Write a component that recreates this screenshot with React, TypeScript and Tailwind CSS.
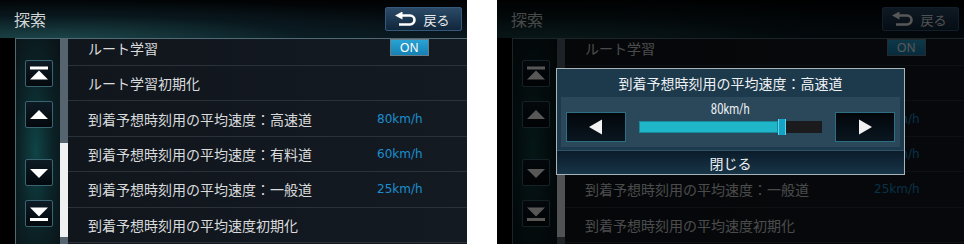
import React from "react";

type Row = { label: string; value?: string; on?: boolean };

const rows: Row[] = [
  { label: "ルート学習", on: true },
  { label: "ルート学習初期化" },
  { label: "到着予想時刻用の平均速度：高速道", value: "80km/h" },
  { label: "到着予想時刻用の平均速度：有料道", value: "60km/h" },
  { label: "到着予想時刻用の平均速度：一般道", value: "25km/h" },
  { label: "到着予想時刻用の平均速度初期化" },
];

const jp = "font-['Noto_Sans_CJK_JP','Noto_Sans',sans-serif]";

function ReturnIcon() {
  return (
    <svg width="22" height="14" viewBox="0 0 22 14">
      <polygon points="0,3.5 7.5,-0.5 7.5,7.5" fill="#fff" />
      <path
        d="M6 3.5 H15 A4.5 4.5 0 0 1 15 12.5 H4"
        fill="none"
        stroke="#fff"
        strokeWidth="2.6"
      />
    </svg>
  );
}

function SideButton({ kind }: { kind: "top" | "up" | "down" | "bottom" }) {
  return (
    <div className="w-[28px] h-[27px] rounded-[2px] border border-[#3b6472] bg-[linear-gradient(#0d1a24,#03080c)] flex items-center justify-center">
      <svg width="22" height="16" viewBox="0 0 22 16">
        {kind === "top" && (
          <>
            <rect x="2" y="0.5" width="18" height="3" fill="#fff" />
            <polygon points="11,4.5 20,13.5 2,13.5" fill="#fff" />
          </>
        )}
        {kind === "up" && <polygon points="11,3 20,12 2,12" fill="#fff" />}
        {kind === "down" && <polygon points="2,4 20,4 11,13" fill="#fff" />}
        {kind === "bottom" && (
          <>
            <polygon points="2,1.5 20,1.5 11,10.5" fill="#fff" />
            <rect x="2" y="12" width="18" height="3" fill="#fff" />
          </>
        )}
      </svg>
    </div>
  );
}

function Screen({ dimmed }: { dimmed?: boolean }) {
  return (
    <div className="relative w-[467px] h-[244px] overflow-hidden bg-black">
      <div className="h-[38px] flex items-center justify-between pl-[14px] pr-[5px] bg-[radial-gradient(ellipse_at_12%_110%,#1d4a4d_0%,rgba(10,30,36,0.6)_45%,transparent_75%),linear-gradient(#010203,#0b1820)]">
        <span className={`${jp} text-[16px] text-[#cfd3d4] leading-none`}>探索</span>
        <div className="w-[77px] h-[24px] rounded-[2px] border border-[#35597a] bg-[linear-gradient(#2c4b68,#10263b)] flex items-center justify-center gap-[6px] pr-[2px]">
          <ReturnIcon />
          <span className={`${jp} text-[13px] text-[#e8ecef] leading-none`}>戻る</span>
        </div>
      </div>

      <div className="ml-[15px] h-[206px] border-l border-t border-[#4f6a74] flex">
        <div className="w-[44px] flex flex-col pl-[9px] pt-[21px] bg-[radial-gradient(ellipse_at_45%_55%,#0f4446_0%,#0b2226_50%,#0a1216_100%)]">
          <SideButton kind="top" />
          <div className="mt-[14px]">
            <SideButton kind="up" />
          </div>
          <div className="mt-[31px]">
            <SideButton kind="down" />
          </div>
          <div className="mt-[14px]">
            <SideButton kind="bottom" />
          </div>
        </div>

        <div className="w-[8px] flex flex-col">
          <div className="h-[104px] bg-[#56646f]" />
          <div className="h-[94px] bg-[#eef0f2]" />
          <div className="flex-1 bg-[#56646f]" />
        </div>

        <div className="flex-1 flex flex-col bg-[linear-gradient(90deg,#11161d,#141a22)]">
          {rows.map((r, i) => (
            <div
              key={i}
              className={`h-[35.4px] shrink-0 border-b border-[#2b3139] grid grid-cols-[289px_1fr] items-center pl-[20px] ${
                i === 0 ? "mt-[-8.4px]" : ""
              }`}
            >
              <span className={`${jp} text-[14px] text-[#d9dbdc] leading-none whitespace-nowrap`}>
                {r.label}
              </span>
              {r.on && (
                <div className="ml-[13px] w-[39px] h-[17px] border border-[#6b7c86] bg-[linear-gradient(#2aa3d4,#1580b4)] flex items-center justify-center">
                  <span className="font-['Liberation_Sans',sans-serif] text-[12px] text-white leading-none tracking-[0.5px]">
                    ON
                  </span>
                </div>
              )}
              {r.value && (
                <span className="font-['DejaVu_Sans',sans-serif] text-[12px] text-[#1b8fd0] leading-none">
                  {r.value}
                </span>
              )}
            </div>
          ))}
        </div>
      </div>

      {dimmed && <div className="absolute inset-0 bg-black/[0.66]" />}

      {dimmed && (
        <div className="absolute left-[59px] top-[68px] w-[349px] h-[107px] border border-[#a7b4ba] bg-[#1d394c] flex flex-col">
          <div className={`h-[28px] flex items-center justify-center ${jp} text-[14px] text-[#eef1f3] leading-none`}>
            到着予想時刻用の平均速度：高速道
          </div>
          <div className="mx-[4px] h-[50px] bg-[#2b485b] flex items-start px-[5px] pt-[3px]">
            <div className="mt-[12px] w-[60px] h-[30px] border border-[#2c6e82] bg-[linear-gradient(#02060a,#0a1620)] flex items-center justify-center">
              <svg width="14" height="16" viewBox="0 0 14 16">
                <polygon points="0,8 13,0.5 13,15.5" fill="#f2f2f2" />
              </svg>
            </div>
            <div className="flex-1 mx-[13px] flex flex-col">
              <div className="h-[18px] flex items-center justify-center">
                <span className="font-['Roboto',sans-serif] text-[14px] text-[#eef1f3] leading-none inline-block scale-x-[0.8]">
                  80km/h
                </span>
              </div>
              <div className="mt-[3px] h-[12px] bg-[#1b1b1d] flex items-center">
                <div className="h-full w-[139px] bg-[#1fb6c9] border border-[#178a9c]" />
                <div className="h-[16px] w-[8px] bg-[#14a3c6] border-x border-[#5fd3ea]" />
              </div>
            </div>
            <div className="mt-[12px] w-[60px] h-[30px] border border-[#2c6e82] bg-[linear-gradient(#02060a,#0a1620)] flex items-center justify-center">
              <svg width="14" height="16" viewBox="0 0 14 16">
                <polygon points="14,8 1,0.5 1,15.5" fill="#f2f2f2" />
              </svg>
            </div>
          </div>
          <div className={`mt-[3px] flex-1 border-t border-[#2f5266] bg-[linear-gradient(#0b1c2a,#173447)] flex items-center justify-center ${jp} text-[14px] text-[#eef1f3] leading-none`}>
            閉じる
          </div>
        </div>
      )}
    </div>
  );
}

export default function App() {
  return (
    <div className="w-[964px] h-[244px] bg-white flex gap-[30px]">
      <Screen />
      <Screen dimmed />
    </div>
  );
}
